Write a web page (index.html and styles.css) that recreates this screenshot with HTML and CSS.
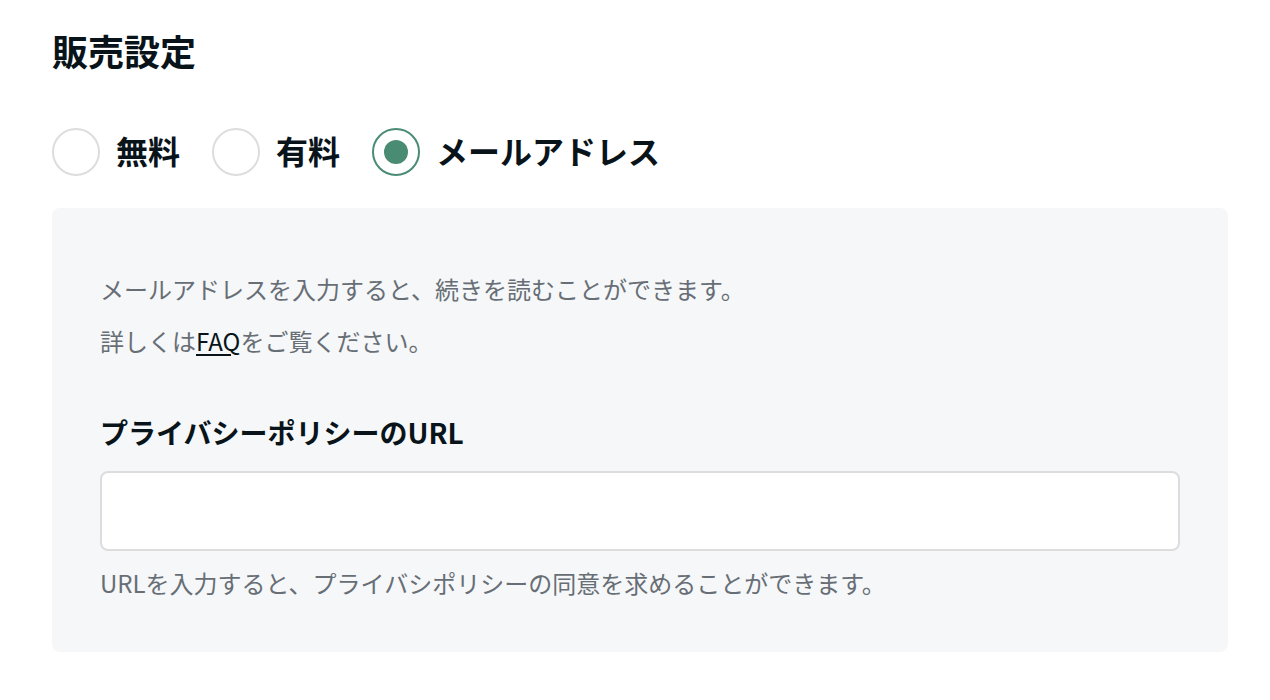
FILE: index.html
```html
<!DOCTYPE html>
<html lang="ja">
<head>
<meta charset="utf-8">
<title>販売設定</title>
<link rel="stylesheet" href="styles.css">
</head>
<body>
<main class="page">
  <h1 class="title">販売設定</h1>
  <div class="radios">
    <label class="radio"><span class="circle"></span><span class="radio-label">無料</span></label>
    <label class="radio"><span class="circle"></span><span class="radio-label">有料</span></label>
    <label class="radio"><span class="circle selected"><span class="dot"></span></span><span class="radio-label">メールアドレス</span></label>
  </div>
  <section class="panel">
    <p class="note">メールアドレスを入力すると、続きを読むことができます。</p>
    <p class="note second">詳しくは<a class="link" href="#">FAQ</a>をご覧ください。</p>
    <h2 class="field-title">プライバシーポリシーのURL</h2>
    <input class="field" type="text">
    <p class="help">URLを入力すると、プライバシポリシーの同意を求めることができます。</p>
  </section>
</main>
</body>
</html>
```
FILE: styles.css
```css
* { box-sizing: border-box; }
body {
  margin: 0;
  background: #ffffff;
  font-family: "Noto Sans CJK JP", "Noto Sans", sans-serif;
  color: #08131a;
}
.page {
  width: 1176px;
  margin-left: 52px;
  padding-top: 23px;
}
.title {
  margin: 0;
  font-size: 36px;
  line-height: 54px;
  font-weight: 700;
}
.radios {
  display: flex;
  align-items: center;
  gap: 32px;
  margin-top: 51px;
  height: 48px;
}
.radio {
  display: flex;
  align-items: center;
  gap: 16px;
}
.circle {
  width: 48px;
  height: 48px;
  border: 2px solid #dddddd;
  border-radius: 50%;
  display: flex;
  align-items: center;
  justify-content: center;
  background: #fff;
}
.circle.selected { border-color: #4a8b73; }
.dot {
  width: 24px;
  height: 24px;
  border-radius: 50%;
  background: #4a8b73;
}
.radio-label {
  font-size: 32px;
  line-height: 44px;
  padding-bottom: 4px;
  font-weight: 700;
}
.panel {
  margin-top: 32px;
  background: #f5f7f9;
  border-radius: 8px;
  padding: 63px 48px 51px;
}
.note {
  margin: 0;
  font-size: 24px;
  line-height: 36px;
  color: #686e75;
}
.note.second { margin-top: 16px; }
.link {
  color: #08131a;
  text-decoration: underline;
  text-underline-offset: 3px;
}
.field-title {
  margin: 52px 0 0;
  font-size: 28px;
  line-height: 42px;
  font-weight: 700;
}
.field {
  display: block;
  width: 100%;
  height: 80px;
  margin-top: 18px;
  border: 2px solid #dddddd;
  border-radius: 8px;
  background: #ffffff;
  outline: none;
}
.help {
  margin: 14px 0 0;
  font-size: 24px;
  line-height: 36px;
  color: #686e75;
}
```
